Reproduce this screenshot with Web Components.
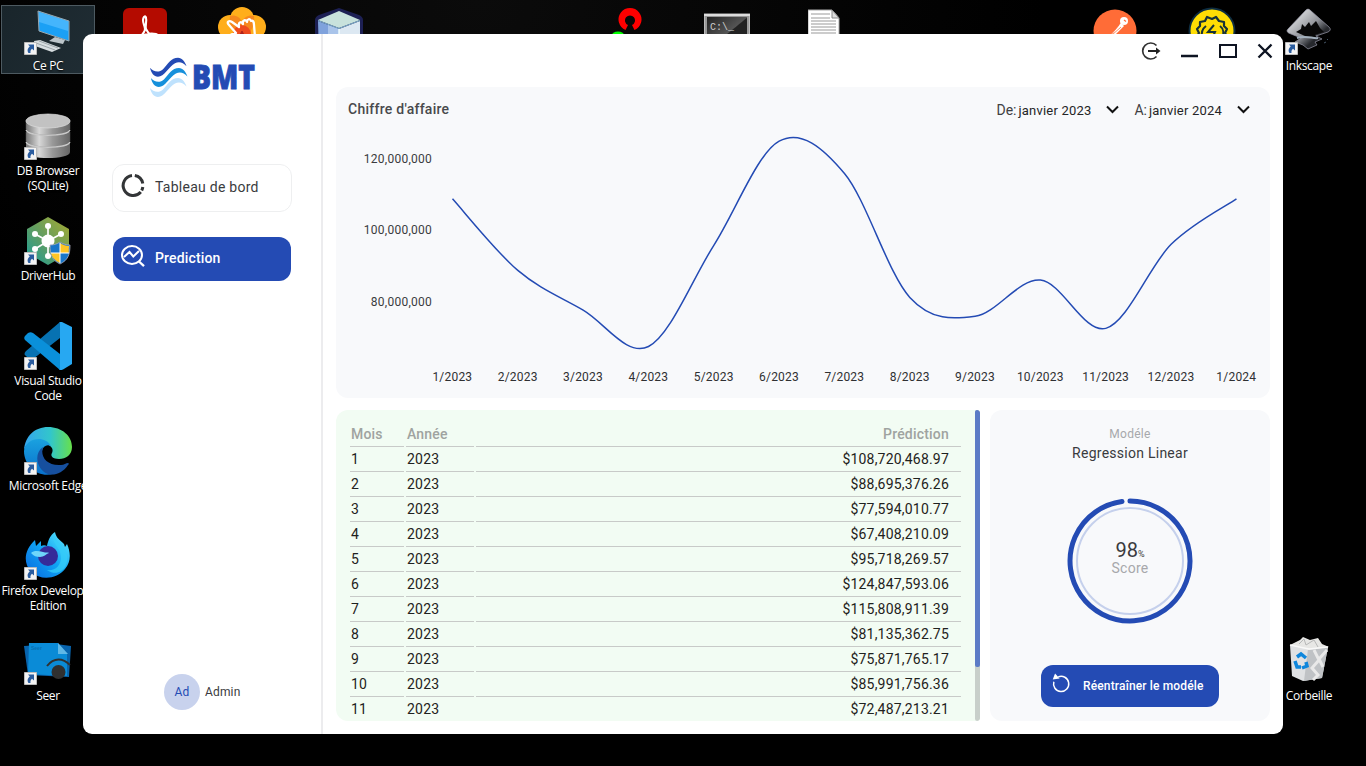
<!DOCTYPE html>
<html lang="fr">
<head>
<meta charset="utf-8">
<title>BMT</title>
<style>
html,body{margin:0;height:100%;overflow:hidden;background:#000}
body{font-family:Roboto,sans-serif}
</style>
</head>
<body>
<desk-top></desk-top>
<script>
const define=(name,html,ready)=>customElements.define(name,class extends HTMLElement{
  constructor(){super();this.attachShadow({mode:'open'})}
  connectedCallback(){
    this.shadowRoot.innerHTML=typeof html==='function'?html(this):html;
    if(ready)ready(this.shadowRoot,this);
  }
});

const art={
pc:`<g><path d="M14 4l31 10v20L15 24z" fill="#1ba0f5"/><path d="M15 5l29 9v10L15 15z" fill="#57bdff" opacity=".7"/><path d="M14 4l31 10v20L15 24z" fill="none" stroke="#99a8b0" stroke-width="1"/><path d="M31 30l10 3-2 4-14-3z" fill="#bcc5ca"/><path d="M10 34l6-1 21 8-9 4-17-6z" fill="#d7dde0"/><path d="M12 36l19 7M15 34l19 7" stroke="#8d979c" stroke-width=".8"/></g>`,
db:`<defs><linearGradient id="m"><stop offset="0" stop-color="#777"/><stop offset=".3" stop-color="#d8d8d8"/><stop offset=".6" stop-color="#999"/><stop offset="1" stop-color="#666"/></linearGradient></defs><g fill="url(#m)"><path d="M2 31v9c0 8 44 8 44 0v-9z"/><path d="M2 20v9c0 8 44 8 44 0v-9z" stroke="#555" stroke-width=".5"/><path d="M2 8v9c0 8 44 8 44 0V8z" stroke="#555" stroke-width=".5"/></g><path d="M2 30c3 7 41 7 44 0M2 18c3 7 41 7 44 0" fill="none" stroke="#c9c9c9" stroke-width="1.3"/><ellipse cx="24" cy="9" rx="22" ry="7" fill="#c2c2c2" stroke="#ddd" stroke-width=".7"/>`,
hub:`<defs><linearGradient id="h" x1="1" y1="0" x2="0" y2="1"><stop offset="0" stop-color="#a9ab2f"/><stop offset=".55" stop-color="#5f9d63"/><stop offset="1" stop-color="#169e9c"/></linearGradient></defs><path d="M24 0l21 12v24L24 48 3 36V12z" fill="url(#h)"/><path d="M24 24V8M24 24L11 17M24 24l13-7M24 24L11 32M24 24v15" stroke="#fff" stroke-width="1.7"/><g fill="#fff"><circle cx="24" cy="24" r="6.5"/><circle cx="24" cy="9" r="3"/><circle cx="11" cy="17" r="3"/><circle cx="37" cy="17" r="3"/><circle cx="11" cy="32" r="3"/><circle cx="24" cy="39" r="3"/></g><path d="M36 25c3 2 6 3 10 3 0 10-2 15-10 19-8-4-10-9-10-19 4 0 7-1 10-3z" fill="#1976c9" stroke="#aab" stroke-width=".8"/><path d="M36 26c3 2 6 3 9 3l-.3 7H36zM36 36v10c-6-3-8-6-9-10z" fill="#ffc524"/><path d="M36 26v20M27 36h18" stroke="#fff" stroke-width="1"/>`,
code:`<path d="M36 0L2 29c-2 2-2 4 0 5l3 3c1 1 3 1 4 0L36 16z" fill="#0772b2"/><path d="M36 48L1 18c-1-1-1-3 0-4l3-3c2-1 3-1 5 0l27 21z" fill="#0a90da"/><path d="M35 0c1-1 3 0 4 .5L48 5v37l-9 5.5c-2 1-3 .5-4 0 1 0 1-1 1-3V3c0-2 0-3-1-3z" fill="#27a8f2"/>`,
edge:`<defs><linearGradient id="e1"><stop offset="0" stop-color="#34a4ee"/><stop offset=".55" stop-color="#32c6cb"/><stop offset="1" stop-color="#68e04b"/></linearGradient><linearGradient id="e2" x1="0" y1="0" x2="0" y2="1"><stop offset="0" stop-color="#1aa1df"/><stop offset="1" stop-color="#0971cc"/></linearGradient></defs><path d="M0 23C1 9 11 0 24 0c14 0 24 9 24 20 0 8-6 12-13 12-6 0-9-3-7-6 1-2 1-5-2-7C18 10 3 13 0 23z" fill="url(#e1)"/><path d="M0 24C1 12 20 7 27 19c-4-2-8 0-9 5-2 11 6 22 11 23C14 51 0 39 0 24z" fill="url(#e2)"/><path d="M19 20c-3 9 3 19 18 18 3 0 5-2 7-2 1 0 1 1 0 2-5 8-14 11-20 9-11-4-15-20-5-27z" fill="#164f9e"/>`,
fox:`<defs><linearGradient id="f" x1="1" y1="0" x2="0" y2="1"><stop offset="0" stop-color="#66f0ff"/><stop offset=".5" stop-color="#10a3f3"/><stop offset="1" stop-color="#0866de"/></linearGradient></defs><path d="M11 8l1 6 5-5v5c2-1 4-1 6 0 1-5 3-11 8-14 1 6 5 8 9 12l1 3 2-3c4 9 4 18-2 25-8 10-24 12-34 3C-1 31 0 18 11 8z" fill="url(#f)"/><path d="M30 3c-4 7 7 12 7 22 0 9-6 14-14 13 13 9 24-5 19-18-3-7-11-10-12-17z" fill="#35cdf8" opacity=".75"/><circle cx="24" cy="24" r="10" fill="#352b99"/><path d="M7 21c3-3 8-2 12-1 3 1 5 0 6 1-3 1-5 4-9 4-4 0-6-1-9-4z" fill="#6fd6fa"/>`,
seer:`<path d="M0 9l32-2 15 2-2 31L4 38z" fill="#0864ad"/><path d="M5 6h29l9 11v22L4 37z" fill="#0a8bd7"/><path d="M34 6l10 11H34z" fill="#60b8e7"/><text x="7" y="13" font-family="Liberation Sans" font-weight="bold" font-size="5" fill="#086fb1">Seer</text><circle cx="34.5" cy="35" r="7" fill="#303030"/><path d="M23 29c7-9 16-8 23-1" fill="none" stroke="#303030" stroke-width="2"/>`,
pdf:`<rect x="1" y="1" width="44" height="46" rx="6" fill="#b40b00"/><path d="M22 10c-3 4 1 8 1 12 0 3-3 6-5 8 5-3 11-4 16-3 3 1 3 3 0 3-4 0-8-4-10-8-1-4 1-8 0-11 0-2-1-2-2-1z" fill="none" stroke="#fff" stroke-width="2.1"/>`,
flower:`<g fill="#ffae1b"><circle cx="24" cy="12" r="12"/><circle cx="12" cy="20" r="12"/><circle cx="36" cy="20" r="12"/></g><g fill="#f47c20" opacity=".75"><path d="M12 9c6-2 12 2 12 8 0-6 6-10 12-8 1 8-2 15-8 20h-8c-6-5-9-12-8-20z"/><circle cx="24" cy="27" r="9" fill="#e92b20"/></g><path d="M15 30c-3-1-3-3 1-3l2-1-7-8c-3-3 0-5 3-3l7 5c-1-5 2-6 4-3-1-4 3-5 4-2 0-3 3-4 4-1 2-1 3 1 3 4l1 12" fill="none" stroke="#fff" stroke-width="2.3" stroke-linejoin="round"/>`,
cube:`<path d="M24 0l20 7q4 2 4 5v36H0V12q0-3 4-5z" fill="#1d2054"/><path d="M3 13l21 8v27H4z" fill="#7fa2dc"/><path d="M13 17l11 4v27H13z" fill="#a9c4ea"/><path d="M45 13l-21 8v27h21z" fill="#dce8f2"/><path d="M24 3l21 9-21 8L3 12z" fill="#c8e2dc"/><path d="M3 12.500l21 8 21-8" fill="none" stroke="#7fb0cc" stroke-width="1"/><path d="M24 21v24" stroke="#f3ffff" stroke-width="1.4"/>`,
git:`<path d="M20.500 22.500A11.500 11.500 0 1 1 29.500 22.500l-2.500-5a5 5 0 1 0-4 0z" fill="#fe0000" transform="translate(0 .5)"/><ellipse cx="13" cy="29" rx="6.500" ry="4.500" fill="#0f0"/>`,
cmd:`<defs><linearGradient id="c" x1="0" y1="0" x2="1" y2="1"><stop offset="0" stop-color="#222"/><stop offset=".5" stop-color="#555"/><stop offset=".52" stop-color="#222"/></linearGradient></defs><rect x=".5" y="7" width="45" height="36" fill="#999" stroke="#bbb"/><rect x="3" y="10" width="40" height="33" fill="url(#c)"/><path d="M0 8h46" stroke="#ddd" stroke-width="2"/><text x="6" y="23" font-family="Liberation Mono" font-size="10" fill="#ccc">C:\\_</text>`,
doc:`<path d="M0 2h24l7 8v38H0z" fill="#fff" stroke="#aaa"/><path d="M24 2v8h7z" fill="#ddd" stroke="#888"/><path d="M3 6h19M3 10h19M3 13h25M3 16h25M3 19h25M3 22h25M3 25h25" stroke="#999" stroke-width="1"/>`,
post:`<circle cx="22" cy="22" r="21.5" fill="#ff6c37"/><circle cx="31" cy="12" r="4" fill="#fff"/><path d="M28 14l3 3-9 9-7 3z" fill="#fff"/><path d="M28 18l-9 8M26 16l-8 10" stroke="#ff6c37" stroke-width=".8"/><path d="M31 11l2 1.500" stroke="#ff6c37" stroke-width="1.2"/>`,
bolt:`<circle cx="24" cy="24" r="22.5" fill="#ffdd04" stroke="#0d2c40" stroke-width="2"/><path d="M10 34l-1-5 2-3-2-4 3-3 0-4 5-1 2-4 5 2 4-2 3 4 5 1 0 4 3 3-2 4 2 3-1 5" fill="none" stroke="#173238" stroke-width="2.2" stroke-linejoin="round"/><path d="M26 18l-6 7h7l-3 7M18 19c-4 3-5 7-4 12M32 19c4 3 4 8 2 12" fill="none" stroke="#173238" stroke-width="2"/>`,
ink:`<defs><linearGradient id="i" x1="0" y1="0" x2="1" y2="1"><stop offset="0" stop-color="#fff"/><stop offset=".5" stop-color="#909399"/><stop offset=".7" stop-color="#26282d"/></linearGradient></defs><path d="M21 3q2-2 4 0l19 17q3 3-1 5l-12 4 6 3-7 3 2 3-9 4-5-4-8-3 6-4-10-4q-6-2-3-5z" fill="url(#i)" stroke="#99a" stroke-width=".7"/><path d="M17 17l3 3 4-5 2 4 5-5 4 7 4 4-9 3 2 3-12-2-9-4 5-3z" fill="#080808"/><path d="M12 31c9-3 16 1 21 0" fill="none" stroke="#a3b0bd" stroke-width="2"/><path d="M39 36l2-1M42 33l1-1" stroke="#456"/>`,
bin:`<path d="M5 8l38 2-6 31-19 3-11-5z" fill="#dfe1e3"/><path d="M23 12l20-2-6 31-18 3z" fill="#bfc2c5"/><path d="M29 13l5 10-7 8 6 7-5 5M42 13l-8 9 4 8" fill="none" stroke="#e9e9e9" stroke-width="3"/><path d="M5 8l10-5 3-3 7 3 8-2 4 6 7 3-20 3z" fill="#e7e7e5"/><path d="M14 7l5-5 2 6 8-5 4 7" fill="none" stroke="#b7b8b8"/><path d="M5 8l19 4 19-2" fill="none" stroke="#f9f9f9" stroke-width="1.3"/><g fill="none" stroke="#0d86dc" stroke-width="3.5"><path d="M12 20l4-3 5 4M10 24l2 6 4 0M21 25l1 4-5 2"/></g>`
};

define('desk-icon',el=>`
<style>
:host{position:absolute;width:94px;height:69px;text-align:center;box-sizing:border-box}
:host([selected]){background:linear-gradient(120deg,#19252b,#202d34);box-shadow:inset 0 0 0 1px #4d5a61}
svg{display:block;margin:2px auto 0;width:48px;height:48px;overflow:hidden}
.arrow{position:absolute;left:23px;top:37px;width:13px;height:13px;margin:0}
span{display:block;margin-top:3px;white-space:nowrap;font:12px/15px "Open Sans",sans-serif;letter-spacing:-.35px;color:#fff;text-shadow:0 1px 2px #000}
</style>
<svg viewBox="0 0 48 48">${art[el.getAttribute('kind')]}</svg>
${el.hasAttribute('link')?'<svg class="arrow" viewBox="0 0 13 13"><path d="M.5.5h12v12H.5z" fill="#f3f3f3" stroke="#bbb"/><path d="M4 2.5h6v6L8 6.7C6.5 8 6.3 9 6.5 11h-2C2.700 8 4 6 5.800 4.500z" fill="#2a5c9f"/></svg>':''}
<span><slot></slot></span>`);

define('bmt-logo',`
<style>:host{display:flex;align-items:flex-start;height:42px}
svg{width:38px;height:42px}
.t{overflow:visible;width:70px}
</style>
<svg viewBox="0 0 38 42"><defs><path id="w" d="M0 10C3 14 9 15.500 13 11.500 18 6 21 0 28 0c4 0 7 4 8.500 8.500C33 4.500 29 3.500 25 5.500 19 9 14 19 8 19 4 19 1 15 0 10z"/></defs><use href="#w" transform="translate(0 21)" fill="#bfe2fd"/><use href="#w" transform="translate(.9 11)" fill="#1690db"/><use href="#w" y=".7" fill="#244bb4"/></svg>
<svg class="t" viewBox="0 0 70 42"><text x="4" y="31.500" textLength="63" lengthAdjust="spacingAndGlyphs" font-family="Open Sans" font-weight="800" font-size="34" fill="#244bb4" stroke="#244bb4" stroke-width=".9">BMT</text></svg>`);

const icons={
ring:`<g fill="none" stroke="#333537" stroke-width="3"><path d="M11 1.600A10 10 0 1 0 19.800 18"/><path d="M13.800 1.600A10 10 0 0 1 21.800 9.500"/><path d="M21.800 13A10 10 0 0 1 20.700 16.500"/></g>`,
search:`<g fill="none" stroke="#fff" stroke-width="2"><ellipse cx="11" cy="10" rx="10" ry="9"/><path d="M17.500 16l5.500 5.200" stroke-width="2.300"/><path d="M3 12L8.500 7l3.800 4.500 5.700-5.500"/></g>`,
redo:`<path d="M9 4.200A8.300 8.300 0 1 1 4.200 9.500" fill="none" stroke="#fff" stroke-width="1.600"/><path d="M5.500 .5L10.500 6 3 7.200z" fill="#fff"/>`,
down:`<path d="M1 1.500l5.500 5.500L12 1.500" fill="none" stroke="#111" stroke-width="2"/>`
};

define('nav-item',el=>`
<style>:host{display:flex;align-items:center;box-sizing:border-box;width:180px;height:48px;padding-left:8px;border-radius:12px;border:1px solid #eeeff0;color:#3a3b3e;font-size:14px;letter-spacing:.26px}
:host([active]){width:178px;height:44px;border:0;background:#244bb4;color:#fff;font-weight:500;letter-spacing:.15px}
svg{width:24px;height:24px;margin:-5px 10px 0 0;overflow:visible}span{margin-top:-2px}
:host([active]) span{margin-top:-3px}</style>
<svg viewBox="0 0 24 24">${icons[el.getAttribute('icon')]}</svg><span><slot></slot></span>`);

define('side-bar',`
<style>:host{display:flex;flex-direction:column;box-sizing:border-box;padding:23px 0 24px 29px;border-right:2px solid #ececee}
bmt-logo{margin:0 0 65px 38px}
nav{display:grid;gap:25px}
nav-item[active]{margin-left:1px}
footer{display:flex;align-items:center;gap:5px;margin:auto 0 0 52px;font-size:12px;color:#3a3b3e;letter-spacing:.15px}
i{font-style:normal;width:36px;height:36px;border-radius:50%;background:#c8d2ed;color:#244bb4;display:grid;place-items:center}</style>
<bmt-logo></bmt-logo>
<nav><nav-item icon="ring">Tableau de bord</nav-item><nav-item icon="search" active>Prediction</nav-item></nav>
<footer><i>Ad</i><span>Admin</span></footer>`);

define('window-bar',`
<style>:host{display:flex;justify-content:flex-end;height:53px;padding-right:10px;gap:20px}
svg{display:block;height:32px;overflow:visible;fill:none;stroke:#0e1422}</style>
<svg width="20" viewBox="0 0 20 32"><path d="M15.500 11.500a8 8 0 1 0 0 11" stroke="#333" stroke-width="1.700" /><path d="M7 17h10" stroke="#222" stroke-width="2"/><path d="M15 13.500l4.500 3.500-4.500 3.500z" fill="#222" stroke="none"/></svg>
<svg width="18" viewBox="0 0 18 32"><path d="M0 22h17" stroke-width="2.400"/></svg>
<svg width="18" viewBox="0 0 18 32"><path d="M1 11h16v12H1z" stroke-width="2"/></svg>
<svg width="16" viewBox="0 0 16 32"><path d="M1.500 10.500l13 13M14.500 10.500l-13 13" stroke-width="2.300"/></svg>`);

define('month-select',el=>`
<style>:host{display:flex;align-items:center;font-size:13px;color:#242526;height:24px}
label{color:#3f4042;font-size:14px;margin-right:2px}span{letter-spacing:.2px;width:88px;padding-top:1px}svg{width:13px;height:9px;margin-top:-1px}</style>
<label>${el.getAttribute('label')}</label><span><slot></slot></span><svg viewBox="0 0 13 9">${icons.down}</svg>`);

define('revenue-chart',`
<style>:host{display:flex;flex-direction:column;box-sizing:border-box;background:#f8f9fb;border-radius:12px;padding:11px 20px 0 12px;height:311px}
header{display:flex;align-items:center;height:25px;margin-top:-1px;padding-bottom:1px}
h2{font-size:14px;font-weight:500;color:#48494c;letter-spacing:.26px;margin:-1px auto 0 0}
month-select+month-select{margin-left:15px}
.plot{display:grid;grid-template-columns:84px 1fr;height:240px}
.y{display:grid;grid-template-rows:repeat(3,71.300px);text-align:right;font-size:12px;line-height:14px;color:#3b3c3e;padding-top:29px;letter-spacing:.25px}
svg{overflow:visible;width:100%;height:240px}
.x{display:grid;grid-template-columns:repeat(13,65.330px);margin-left:71.700px;font-size:12px;line-height:14px;color:#2f3032;text-align:center;letter-spacing:.2px;margin-top:7px}
</style>
<header><h2>Chiffre d'affaire</h2><month-select label="De:">janvier 2023</month-select><month-select label="A:">janvier 2024</month-select></header>
<div class="plot"><div class="y"><span>120,000,000</span><span>100,000,000</span><span>80,000,000</span></div><svg><path fill="none" stroke="#244bb4" stroke-width="1.500"/></svg></div>
<div class="x"></div>`,r=>{
  // Cardinal spline through the monthly revenue, in millions.
  const v=[108.72,88.695,77.594,67.408,95.718,124.848,115.809,81.135,75.872,85.992,72.487,96,108.72];
  const p=v.map((n,i)=>[20.500+i*65.330,35.500+(120-n)*3.575]);
  const at=i=>p[Math.max(0,Math.min(p.length-1,i))];
  let d='M'+p[0];
  for(let i=0;i<p.length-1;i++){
    const [a,b,c,e]=[at(i-1),at(i),at(i+1),at(i+2)];
    d+='C'+[b[0]+(c[0]-a[0])/6,b[1]+(c[1]-a[1])/6,c[0]-(e[0]-b[0])/6,c[1]-(e[1]-b[1])/6,...c];
  }
  r.querySelector('path').setAttribute('d',d);
  r.querySelector('.x').innerHTML=v.map((_,i)=>`<span>${i<12?i+1+'/2023':'1/2024'}</span>`).join('');
});

define('prediction-table',`
<style>:host{display:flex;height:311px;border-radius:12px 3px 3px 12px;overflow:hidden;background:#f2fcf3}
.body{flex:1;padding:12px 14px 0 14px;overflow:hidden;box-sizing:border-box}
.row{display:grid;grid-template-columns:54px 68px 1fr;gap:2px;height:25px;font-size:14px;line-height:25px;letter-spacing:.2px;color:#1f2220}
.row>*{border-bottom:1px solid #c8cac8;padding-left:1px;box-sizing:border-box;height:25px}
.row>:last-child{text-align:right;padding-right:12px}
.head{font-weight:500;color:#9fa3a0;line-height:24px}
.bar{width:5px;background:#c8cfca;border-radius:3px}.bar div{height:257px;background:#5c7bc6;border-radius:2px}
</style><div class="body"></div><div class="bar"><div></div></div>`,r=>{
  const a='108,720,468.97 88,695,376.26 77,594,010.77 67,408,210.09 95,718,269.57 124,847,593.06 115,808,911.39 81,135,362.75 75,871,765.17 85,991,756.36 72,487,213.21'.split(' ');
  r.querySelector('.body').innerHTML='<div class="row head"><span>Mois</span><span>Année</span><span>Prédiction</span></div>'+a.map((n,i)=>`<div class="row"><span>${i+1}</span><span>2023</span><span>$${n}</span></div>`).join('');
});

define('model-card',`
<style>:host{display:flex;flex-direction:column;align-items:center;box-sizing:border-box;height:311px;background:#f8f9fb;border-radius:12px;padding-top:16px}
small{font-size:12px;line-height:16px;color:#a7a8ab;letter-spacing:.3px}
b{font-weight:400;font-size:14px;line-height:20px;color:#3a3b3e;letter-spacing:.26px;margin-top:1px}
.score{display:grid;width:126px;height:126px;margin-top:35px}
.score>*{grid-area:1/1}
.txt{align-self:center;text-align:center;color:#3a3b3e;font-size:20px;line-height:17px;margin-top:-4px}
.txt i{font-style:normal;font-size:9px}.txt div{font-size:14px;letter-spacing:.3px;color:#a7a8ab;margin-top:-3px}
button{display:flex;align-items:center;box-sizing:border-box;width:178px;height:42px;margin-top:41px;padding:0 0 0 9px;border:0;border-radius:12px;background:#244bb4;color:#fff;font:500 12px Roboto,sans-serif;letter-spacing:.15px;white-space:nowrap}
svg.r{width:22px;height:22px;margin:-4px 11px 0 0}
</style>
<small>Modéle</small><b>Regression Linear</b>
<div class="score"><svg viewBox="0 0 126 126"><circle cx="63" cy="63" r="53" fill="none" stroke="#c5d0ec" stroke-width="2"/><path d="M63 3A60 60 0 1 1 55 3.540" fill="none" stroke="#244bb4" stroke-width="5" stroke-linecap="round"/></svg>
<div class="txt">98<i>%</i><div>Score</div></div></div>
<button><svg class="r" viewBox="0 0 24 24">${icons.redo}</svg>Réentraîner le modéle</button>`);

define('app-window',`
<style>:host{position:absolute;left:83px;top:34px;width:1200px;height:700px;display:grid;grid-template-columns:240px 1fr;background:#fff;border-radius:9px;overflow:hidden}
main{display:flex;flex-direction:column;min-width:0}
section{padding:0 13px;display:grid;grid-template-columns:934px;gap:12px}
.low{display:grid;grid-template-columns:644px 280px;gap:10px}</style>
<side-bar></side-bar><main><window-bar></window-bar><section><revenue-chart></revenue-chart><div class="low"><prediction-table></prediction-table><model-card></model-card></div></section></main>`);

const place=[
[1,5,'pc','Ce PC',1],[1,110,'db','DB Browser<br>(SQLite)',1],[1,215,'hub','DriverHub',1],[1,320,'code','Visual Studio<br>Code',1],[1,425,'edge','Microsoft Edge',1],[1,530,'fox','Firefox Developer<br>Edition',1],[1,635,'seer','Seer',1],
[99,5,'pdf','',0],[195,5,'flower','',0],[292,6,'cube','',0],[582,5,'git','',0],[681,5,'cmd','',0],[785,6,'doc','',0],[1070,7,'post','',0],[1165,5,'bolt','',0],[1262,5,'ink','Inkscape',1],[1262,635,'bin','Corbeille',0]];
define('desk-top',`
<style>:host{display:block;position:relative;width:1366px;height:766px;overflow:hidden;background:radial-gradient(ellipse at 35% 0,#0b0b0b,#000 45%)}</style>
${place.map(([x,y,k,t,l],i)=>`<desk-icon kind="${k}" style="left:${x}px;top:${y}px" ${l?'link':''} ${i?'':'selected'}>${t}</desk-icon>`).join('')}
<app-window></app-window>`);
</script>
</body>
</html>
